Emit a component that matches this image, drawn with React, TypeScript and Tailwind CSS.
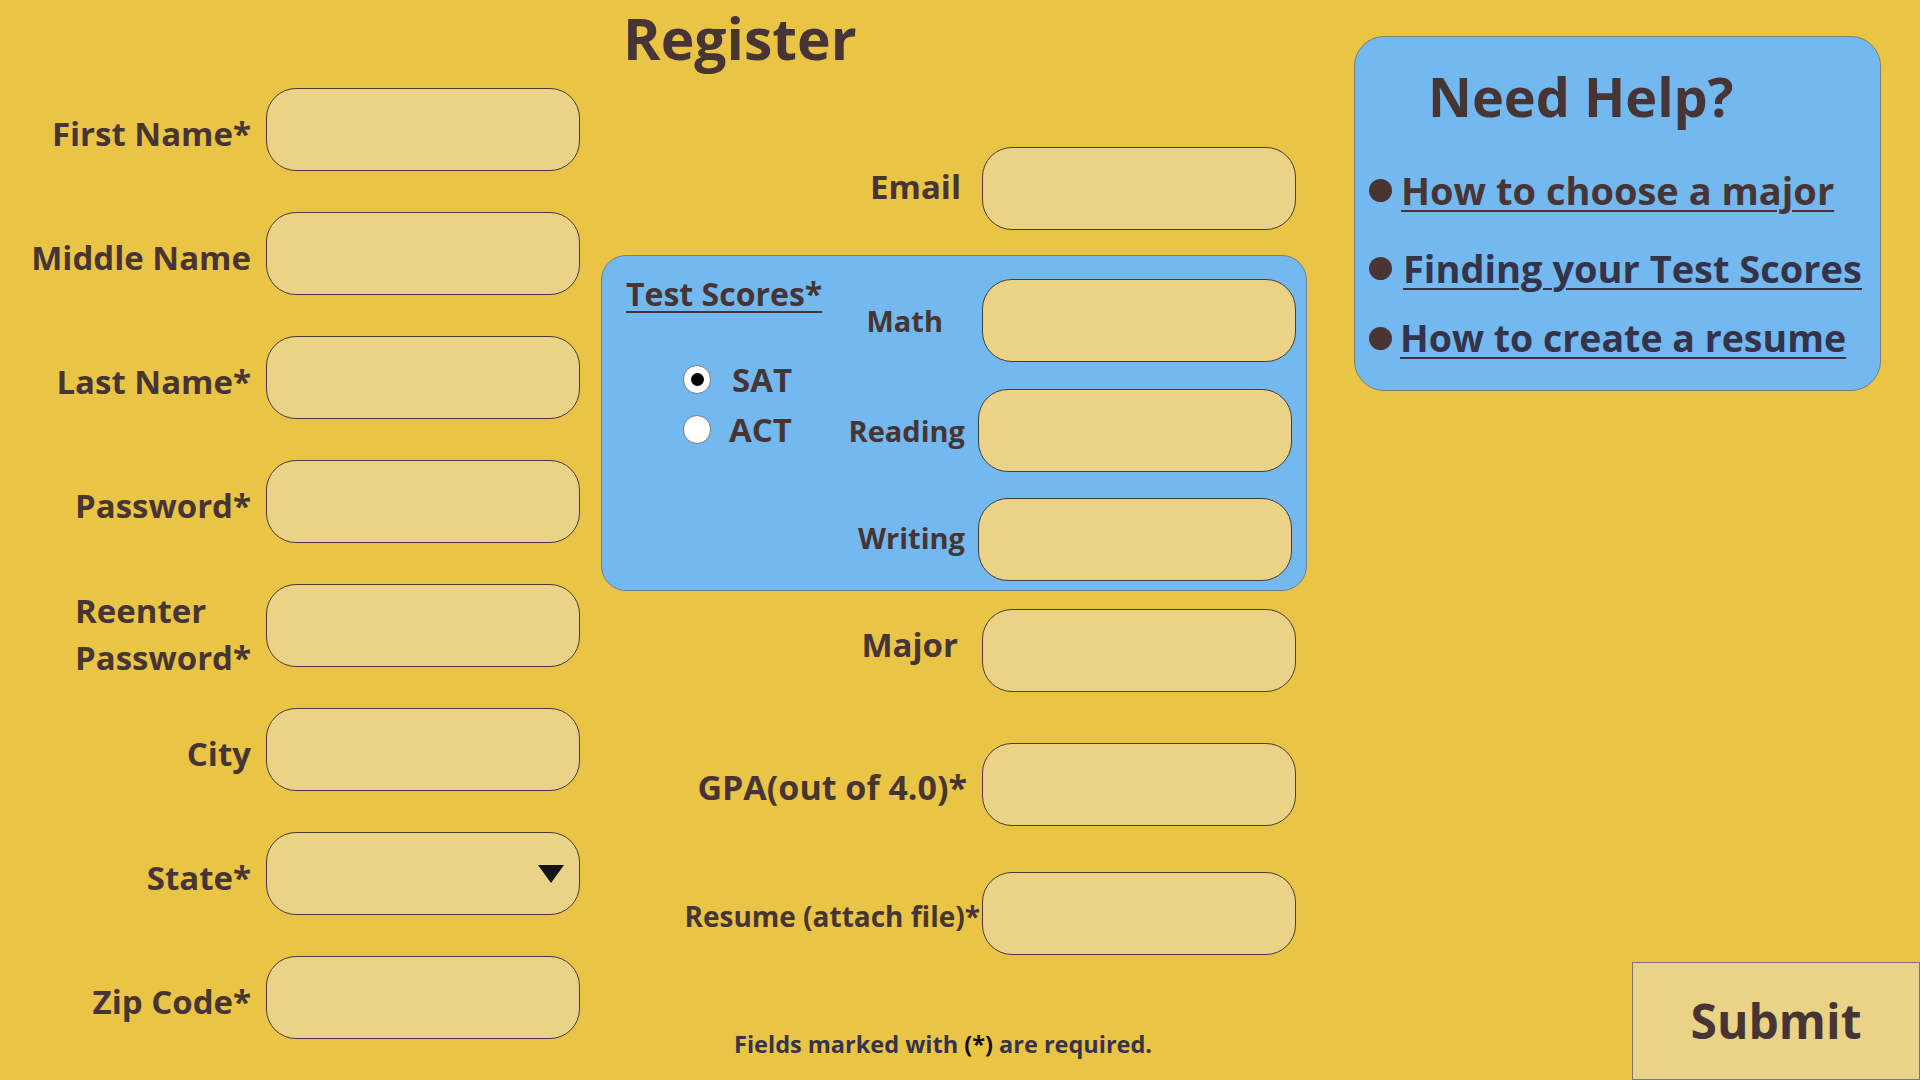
import React from "react";

const font = { fontFamily: '"Open Sans", "Noto Sans", sans-serif' };

function Field({ select = false }: { select?: boolean }) {
  return (
    <div className="relative w-[314px] h-[83px] shrink-0 rounded-[30px] border border-[#4a3a3a] bg-[#EAD386] flex items-center justify-end pr-[15px]">
      {select && (
        <svg width="26" height="18" viewBox="0 0 26 18">
          <polygon points="0,0 26,0 13,18" fill="#141414" />
        </svg>
      )}
    </div>
  );
}

function LeftRow({ label, select = false }: { label: React.ReactNode; select?: boolean }) {
  return (
    <div className="flex items-center h-[83px]">
      <div className="w-[251px] flex justify-end text-right text-[33px] font-bold leading-none text-[#473535] pt-[7px]">
        {label}
      </div>
      <div className="ml-[15px]">
        <Field select={select} />
      </div>
    </div>
  );
}

function Radio({ checked }: { checked?: boolean }) {
  return (
    <div className="w-[28px] h-[29px] rounded-full bg-white border border-[#7a7a7a] flex items-center justify-center">
      {checked && <div className="w-[13px] h-[13px] rounded-full bg-black" />}
    </div>
  );
}

export default function App() {
  return (
    <div
      className="w-[1920px] h-[1080px] bg-[#EAC445] flex overflow-hidden text-[#473535]"
      style={font}
    >
      {/* Left column */}
      <div className="w-[590px] shrink-0 flex flex-col pt-[88px] gap-[41px]">
        <LeftRow label="First Name*" />
        <LeftRow label="Middle Name" />
        <LeftRow label="Last Name*" />
        <LeftRow label="Password*" />
        <LeftRow
          label={
            <div className="text-left leading-[47px] pt-[9px]">
              Reenter
              <br />
              Password*
            </div>
          }
        />
        <LeftRow label="City" />
        <LeftRow label="State*" select />
        <LeftRow label="Zip Code*" />
      </div>

      {/* Middle column */}
      <div className="ml-[11px] w-[706px] shrink-0 flex flex-col">
        <div className="h-[88px] pl-[22px] pt-[10px]">
          <h1 className="text-[57px] font-bold leading-none">Register</h1>
        </div>

        <div className="mt-[59px] h-[83px] flex items-center justify-end pr-[11px]">
          <span className="text-[33px] font-bold leading-none pb-[4px]">Email</span>
          <div className="ml-[21px]">
            <Field />
          </div>
        </div>

        <div className="mt-[25px] h-[336px] rounded-[25px] bg-[#73B9F0] border border-[#6f7f8f] flex">
          <div className="w-[240px] shrink-0 flex flex-col pl-[24px] pt-[22px]">
            <span className="text-[32px] font-bold leading-none underline decoration-2 underline-offset-[5px]">
              Test Scores*
            </span>
            <div className="mt-[49px] flex flex-col gap-[10px] pl-[57px]">
              <div className="h-[40px] flex items-center">
                <Radio checked />
                <span className="ml-[21px] text-[33px] font-bold leading-none">SAT</span>
              </div>
              <div className="h-[40px] flex items-center">
                <Radio />
                <span className="ml-[18px] text-[33px] font-bold leading-none">ACT</span>
              </div>
            </div>
          </div>
          <div className="flex-1 flex flex-col pt-[23px]">
            <div className="h-[83px] flex items-center justify-end pr-[10px]">
              <span className="text-[29px] font-bold leading-none">Math</span>
              <div className="ml-[39px]">
                <Field />
              </div>
            </div>
            <div className="mt-[27px] h-[83px] flex items-center justify-end pr-[14px]">
              <span className="text-[29px] font-bold leading-none">Reading</span>
              <div className="ml-[13px]">
                <Field />
              </div>
            </div>
            <div className="mt-[26px] h-[83px] flex items-center justify-end pr-[14px]">
              <span className="text-[29px] font-bold leading-none pb-[4px]">Writing</span>
              <div className="ml-[13px]">
                <Field />
              </div>
            </div>
          </div>
        </div>

        <div className="mt-[18px] h-[83px] flex items-center justify-end pr-[11px]">
          <span className="text-[33px] font-bold leading-none pb-[12px]">Major</span>
          <div className="ml-[24px]">
            <Field />
          </div>
        </div>

        <div className="mt-[51px] h-[83px] flex items-center justify-end pr-[11px]">
          <span className="text-[34px] font-bold leading-none pt-[4px]">GPA(out of 4.0)*</span>
          <div className="ml-[15px]">
            <Field />
          </div>
        </div>

        <div className="mt-[46px] h-[83px] flex items-center justify-end pr-[11px]">
          <span className="text-[28px] font-bold leading-none pt-[4px]">Resume (attach file)*</span>
          <div className="ml-[2px]">
            <Field />
          </div>
        </div>

        <p className="mt-[78px] pl-[133px] text-[23.5px] font-bold leading-none text-[#35334a] whitespace-nowrap">
          Fields marked with <span className="text-[#111111]">(*)</span> are required.
        </p>
      </div>

      {/* Right column */}
      <div className="ml-[47px] w-[566px] shrink-0 flex flex-col">
        <div className="mt-[36px] w-[527px] h-[355px] rounded-[30px] bg-[#73B9F0] border border-[#7d8070] flex flex-col">
          <h2 className="pl-[73px] pt-[32px] text-[54px] font-bold leading-none">Need Help?</h2>
          <div className="flex flex-col pl-[14px]">
            <div className="mt-[42px] h-[50px] flex items-center">
              <span className="w-[23px] h-[23px] rounded-full bg-[#4a3535] shrink-0" />
              <a className="ml-[9px] text-[38px] font-bold leading-none text-[#473535] underline decoration-2 underline-offset-[5px] whitespace-nowrap">
                How to choose a major
              </a>
            </div>
            <div className="mt-[28px] h-[50px] flex items-center">
              <span className="w-[23px] h-[23px] rounded-full bg-[#4a3535] shrink-0" />
              <a className="ml-[11px] text-[38px] font-bold leading-none text-[#34334a] underline decoration-2 underline-offset-[5px] whitespace-nowrap">
                Finding your Test Scores
              </a>
            </div>
            <div className="mt-[20px] h-[50px] flex items-center">
              <span className="w-[23px] h-[23px] rounded-full bg-[#4a3535] shrink-0" />
              <a className="ml-[8px] text-[37.5px] font-bold leading-none text-[#34334a] underline decoration-2 underline-offset-[5px] whitespace-nowrap">
                How to create a resume
              </a>
            </div>
          </div>
        </div>
        <div className="flex-1" />
        <button className="self-end w-[288px] h-[118px] bg-[#EAD386] border border-[#777777] flex items-center justify-center text-[48px] font-bold leading-none text-[#473535]">
          Submit
        </button>
      </div>
    </div>
  );
}
